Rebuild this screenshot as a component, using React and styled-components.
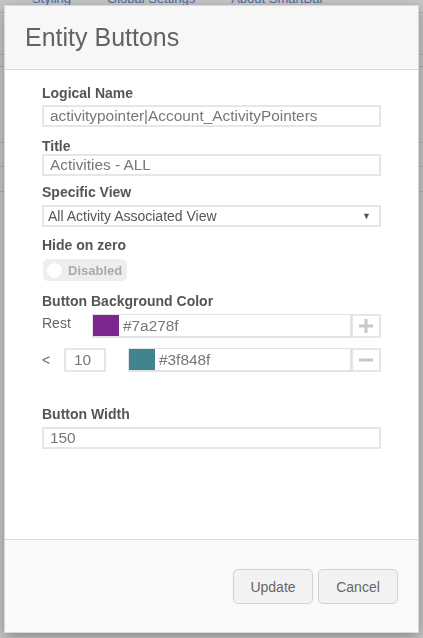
import React from 'react';
import styled, { createGlobalStyle } from 'styled-components';

const Global = createGlobalStyle`
  html, body {
    margin: 0;
    padding: 0;
    background: #c9c9c9;
    font-family: "Liberation Sans", Arial, sans-serif;
    overflow: hidden;
  }
  * { box-sizing: border-box; }
`;

const Page = styled.div`
  height: 638px;
  display: flex;
  flex-direction: column;
`;

const Tabs = styled.div`
  display: flex;
  gap: 36px;
  padding-left: 32px;
  margin-top: -9px;
  font-size: 13px;
  line-height: 15px;
  color: #4d6ea8;
`;

const PageLine = styled.div`
  height: ${({ $h }) => $h}px;
  border-bottom: 1px solid #b3b3b3;
`;

const Overlay = styled.div`
  position: fixed;
  inset: 0;
  padding: 5px 4px 5px 4px;
  display: flex;
`;

const Modal = styled.div`
  flex: 1;
  display: flex;
  flex-direction: column;
  background: #fff;
  border: 1px solid rgba(0, 0, 0, 0.15);
  box-shadow: 0 4px 14px rgba(0, 0, 0, 0.35);
`;

const Header = styled.div`
  height: 64px;
  flex-shrink: 0;
  display: flex;
  align-items: center;
  padding-left: 20px;
  background: #f7f7f7;
  border-bottom: 1px solid #d9dcdc;
`;

const Heading = styled.h1`
  margin: 0;
  font-size: 25px;
  font-weight: 400;
  color: #636363;
`;

const Body = styled.div`
  flex: 1;
  padding: 15px 37px 0 37px;
`;

const Label = styled.div`
  font-size: 14px;
  line-height: 16px;
  font-weight: 700;
  color: #555;
  margin-top: ${({ $mt }) => $mt || 0}px;
  margin-bottom: ${({ $mb }) => $mb || 0}px;
`;

const TextInput = styled.div`
  height: 22px;
  border: 2px solid #e6e6e6;
  padding-left: 6px;
  font-size: 15.4px;
  line-height: 18px;
  color: #777;
  white-space: nowrap;
  overflow: hidden;
`;

const NumberInput = styled(TextInput)`
  width: 42px;
  height: 24px;
  flex-shrink: 0;
  padding-left: 8px;
  line-height: 20px;
`;

const Select = styled.div`
  height: 22px;
  border: 2px solid #e6e6e6;
  padding: 0 8px 0 4px;
  display: flex;
  align-items: center;
  justify-content: space-between;
  font-size: 14px;
  color: #555;
`;

const Caret = styled.span`
  font-size: 9px;
  color: #555;
`;

const Toggle = styled.div`
  width: 84px;
  height: 22px;
  border-radius: 5px;
  background: #eeeeee;
  display: flex;
  align-items: center;
  gap: 6px;
  padding-left: 4px;
  margin-left: 1px;
  font-size: 13px;
  font-weight: 700;
  color: #aaa;
`;

const Knob = styled.span`
  width: 15px;
  height: 15px;
  border-radius: 50%;
  background: #fff;
`;

const ColorRow = styled.div`
  display: flex;
  align-items: center;
  height: 24px;
  margin-top: ${({ $mt }) => $mt || 0}px;
`;

const RowText = styled.span`
  font-size: 14px;
  color: #666;
  width: ${({ $w }) => $w}px;
  flex-shrink: 0;
  align-self: flex-start;
  line-height: 18px;
  margin-top: ${({ $mt }) => $mt || 0}px;
`;

const Spacer = styled.span`
  width: ${({ $w }) => $w}px;
  flex-shrink: 0;
`;

const ColorGroup = styled.div`
  flex: 1;
  display: flex;
  height: 24px;
`;

const ColorField = styled.div`
  flex: 1;
  display: flex;
  align-items: center;
  border: 1px solid #e3e3e3;
  border-width: 1px 2px 2px 1px;
`;

const Swatch = styled.span`
  width: 26px;
  align-self: stretch;
  background: ${({ $c }) => $c};
`;

const HexText = styled.span`
  padding-left: 4px;
  font-size: 15.4px;
  color: #777;
`;

const AddonButton = styled.div`
  width: 29px;
  display: flex;
  align-items: center;
  justify-content: center;
  border: 2px solid #e6e6e6;
  border-left-width: 1px;
`;

const Footer = styled.div`
  height: 93px;
  flex-shrink: 0;
  border-top: 1px solid #d9dcdc;
  background: #f9f9f9;
  display: flex;
  justify-content: flex-end;
  align-items: flex-start;
  gap: 5px;
  padding: 29px 20px 0 0;
`;

const Button = styled.button`
  width: 80px;
  height: 35px;
  border: 1px solid #d2d2d2;
  border-radius: 5px;
  background: #f3f2f2;
  color: #666;
  font-family: "Liberation Sans", Arial, sans-serif;
  font-size: 14px;
  padding: 0;
`;

const Plus = () => (
  <svg width="14" height="14" viewBox="0 0 14 14">
    <path d="M7 0v14M0 7h14" stroke="#c8c8c8" strokeWidth="3" />
  </svg>
);

const Minus = () => (
  <svg width="14" height="14" viewBox="0 0 14 14">
    <path d="M0 7h14" stroke="#c8c8c8" strokeWidth="3" />
  </svg>
);

export default function App() {
  return (
    <>
      <Global />
      <Page>
        <Tabs>
          <span>Styling</span>
          <span>Global Settings</span>
          <span>About SmartBar</span>
        </Tabs>
        <PageLine $h={7} />
        <PageLine $h={42} />
        <PageLine $h={12} />
        <PageLine $h={76} />
        <PageLine $h={24} />
        <PageLine $h={25} />
      </Page>
      <Overlay>
        <Modal>
          <Header>
            <Heading>Entity Buttons</Heading>
          </Header>
          <Body>
            <Label $mb={4}>Logical Name</Label>
            <TextInput>activitypointer|Account_ActivityPointers</TextInput>

            <Label $mt={11}>Title</Label>
            <TextInput>Activities - ALL</TextInput>

            <Label $mt={8} $mb={5}>Specific View</Label>
            <Select>
              <span>All Activity Associated View</span>
              <Caret>▼</Caret>
            </Select>

            <Label $mt={10} $mb={6}>Hide on zero</Label>
            <Toggle>
              <Knob />
              Disabled
            </Toggle>

            <Label $mt={12} $mb={5}>Button Background Color</Label>
            <ColorRow>
              <RowText $w={50}>Rest</RowText>
              <ColorGroup>
                <ColorField>
                  <Swatch $c="#7a278f" />
                  <HexText>#7a278f</HexText>
                </ColorField>
                <AddonButton>
                  <Plus />
                </AddonButton>
              </ColorGroup>
            </ColorRow>
            <ColorRow $mt={10}>
              <RowText $w={22} $mt={3}>&lt;</RowText>
              <NumberInput>10</NumberInput>
              <Spacer $w={22} />
              <ColorGroup>
                <ColorField>
                  <Swatch $c="#3f848f" />
                  <HexText>#3f848f</HexText>
                </ColorField>
                <AddonButton>
                  <Minus />
                </AddonButton>
              </ColorGroup>
            </ColorRow>

            <Label $mt={34} $mb={5}>Button Width</Label>
            <TextInput>150</TextInput>
          </Body>
          <Footer>
            <Button>Update</Button>
            <Button>Cancel</Button>
          </Footer>
        </Modal>
      </Overlay>
    </>
  );
}
